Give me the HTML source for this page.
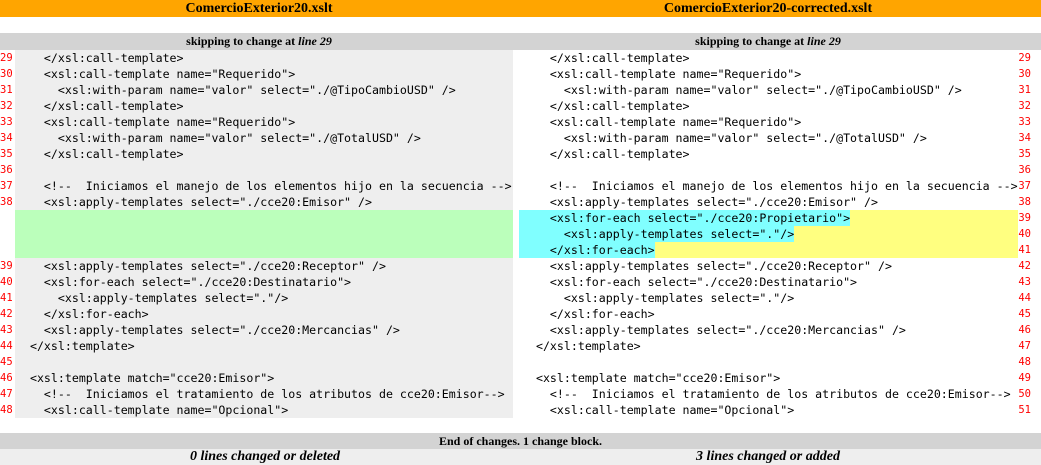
<!DOCTYPE html>
<html><head><style>
body{margin:0;width:1041px;height:465px;position:relative;background:#fff;overflow:hidden;font-family:"Liberation Serif",serif}
.hdr{position:absolute;top:0;height:17px;background:#ffa500;width:1041px}
.ht{position:absolute;top:0;font-weight:bold;font-size:14px;line-height:17px;transform:translateX(-50%);white-space:nowrap}
.bar{position:absolute;left:0;width:1041px;background:#d3d3d3;height:17px;font-size:12px;font-weight:bold;text-align:center;line-height:17px}
.row{position:absolute;left:0;width:1041px;height:16px;font-family:"DejaVu Sans Mono","Liberation Mono",monospace;font-size:11.6px;line-height:16px;white-space:pre}
.ln{position:absolute;color:#f00;font-size:10.5px}
.l{position:absolute;left:0;width:13px;text-align:left}
.r{position:absolute;right:10px;text-align:right}
.lc{position:absolute;left:15px;width:498px;height:16px;background:#eee;}
.rc{position:absolute;left:521px;width:497px;height:16px}
.t{position:absolute;left:1px}
</style></head><body>
<div class="hdr"></div>
<div class="ht" style="left:259px">ComercioExterior20.xslt</div>
<div class="ht" style="left:768px">ComercioExterior20-corrected.xslt</div>
<div class="bar" style="top:33px"><span style="position:absolute;left:259px;transform:translateX(-50%)">skipping to change at <i>line 29</i></span><span style="position:absolute;left:768px;transform:translateX(-50%)">skipping to change at <i>line 29</i></span></div>
<div id="rows"></div>
<div class="bar" style="top:433px">End of changes. 1 change block.</div>
<div style="position:absolute;top:449px;left:0;width:1041px;height:16px;background:#eee;font-size:14px;font-weight:bold;font-style:italic;line-height:16px">
<span style="position:absolute;left:265px;transform:translateX(-50%)">0 lines changed or deleted</span>
<span style="position:absolute;left:768px;transform:translateX(-50%)">3 lines changed or added</span></div>
<script>
var L=[
"    </xsl:call-template>",
"    <xsl:call-template name=\"Requerido\">",
"      <xsl:with-param name=\"valor\" select=\"./@TipoCambioUSD\" />",
"    </xsl:call-template>",
"    <xsl:call-template name=\"Requerido\">",
"      <xsl:with-param name=\"valor\" select=\"./@TotalUSD\" />",
"    </xsl:call-template>",
"",
"    <!--  Iniciamos el manejo de los elementos hijo en la secuencia -->",
"    <xsl:apply-templates select=\"./cce20:Emisor\" />"];
var A=[
"    <xsl:for-each select=\"./cce20:Propietario\">",
"      <xsl:apply-templates select=\".\"/>",
"    </xsl:for-each>"];
var B=[
"    <xsl:apply-templates select=\"./cce20:Receptor\" />",
"    <xsl:for-each select=\"./cce20:Destinatario\">",
"      <xsl:apply-templates select=\".\"/>",
"    </xsl:for-each>",
"    <xsl:apply-templates select=\"./cce20:Mercancias\" />",
"  </xsl:template>",
"",
"  <xsl:template match=\"cce20:Emisor\">",
"    <!--  Iniciamos el tratamiento de los atributos de cce20:Emisor-->",
"    <xsl:call-template name=\"Opcional\">"];
function esc(s){return s.replace(/&/g,'&amp;').replace(/</g,'&lt;').replace(/>/g,'&gt;')}
var h='',y=50;
function row(lt,ln,rt,rn,mode){
 var s='<div class="row" style="top:'+y+'px">';
 s+='<span class="ln l">'+(ln||'')+'</span>';
 s+='<div class="lc" style="background:'+(mode?'#bbffbb':'#eee')+'"><span class="t">'+esc(lt)+'</span></div>';
 s+='<div class="rc" style="'+(mode?'background:#ffff80':'')+'">'+(mode?'<span class="t" style="left:-2px;padding-left:3px;background:#80ffff">'+esc(rt)+'</span>':'<span class="t">'+esc(rt)+'</span>')+'</div>';
 s+='<span class="ln r">'+rn+'</span></div>';
 h+=s;y+=16;
}
for(var i=0;i<10;i++)row(L[i],29+i,L[i],29+i,0);
for(var i=0;i<3;i++)row('','',A[i],39+i,1);
for(var i=0;i<10;i++)row(B[i],39+i,B[i],42+i,0);
document.getElementById('rows').innerHTML=h;
</script>
</body></html>
